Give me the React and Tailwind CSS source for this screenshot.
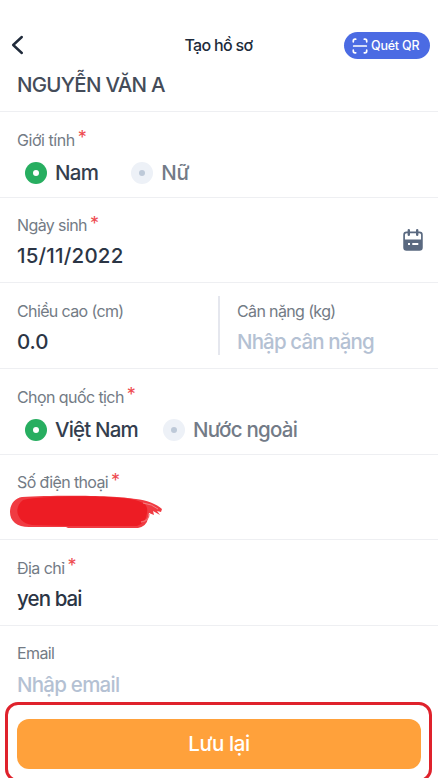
import React from "react";

function Label({ children, required, className }) {
  return (
    <div className="flex h-6 items-center text-[16px] leading-6 text-[#737b85]">
      <span className={className}>{children}</span>
      {required && <span className="-mt-[5px] ml-[3px] text-[18px] leading-6 text-[#ee4b4f]">*</span>}
    </div>
  );
}

function Field({ label, required, labelClass, height, children }) {
  return (
    <section className={`${height} shrink-0 border-b border-[#eeeff2] pl-[17px] pt-4`}>
      <Label required={required} className={labelClass}>{label}</Label>
      {children}
    </section>
  );
}

function Value({ children, className }) {
  return (
    <div className="mt-1.5 h-[26px] text-[20.5px] font-[450] leading-[26px]">
      <span className={className}>{children}</span>
    </div>
  );
}

function Radio({ on, className, children }) {
  return (
    <div className="flex items-center gap-2">
      <span className={`flex h-[22px] w-[22px] items-center justify-center rounded-full ${on ? "bg-[#27ae60]" : "bg-[#edf1f7]"}`}>
        <span className={`h-1.5 w-1.5 rounded-full ${on ? "bg-white" : "bg-[#bdc9d8]"}`} />
      </span>
      <span className={className}>{children}</span>
    </div>
  );
}

export default function App() {
  return (
    <main className="flex h-[778px] w-[438px] flex-col overflow-hidden whitespace-nowrap bg-white font-['Inter','Liberation_Sans',sans-serif]">
      <header className="grid h-[70px] shrink-0 grid-cols-[1fr_auto_1fr] items-center pl-[10px] pr-2 pt-[21px]">
        <svg className="-mt-0.5" width="13" height="20" viewBox="0 0 13 20" fill="none" stroke="#202b3b" strokeWidth="2.4" strokeLinecap="round" strokeLinejoin="round">
          <path d="M11.8 2 3.2 10l8.6 8" />
        </svg>
        <h1 className="-ml-[3px] -mt-px text-[16px] font-medium tracking-[-0.68px] text-[#202b3b]">Tạo hồ sơ</h1>
        <button className="flex h-[27px] w-[86px] items-center justify-self-end rounded-full bg-[#4b6be3] pl-2 text-white">
          <svg width="16" height="16" viewBox="0 0 16 16" fill="none" stroke="currentColor" strokeWidth="1.7" strokeLinecap="round">
            <path d="M1.3 3.8V3Q1.3 1.2 3 1.2h.7M12.3 1.2H13q1.7 0 1.7 1.8v.8M1.3 12.2v.8q0 1.8 1.7 1.8h.7M12.3 14.8h.7q1.7 0 1.7-1.8v-.8M1.7 8h12.6" />
          </svg>
          <span className="ml-[3px] mt-px text-[12.5px] font-medium tracking-[-0.2px]">Quét QR</span>
        </button>
      </header>

      <div className="h-[42px] shrink-0 border-b border-[#eeeff2] pl-[17px] pt-0.5 text-[20.5px] font-[450] leading-[26px] text-[#444c59]">
        <span className="tracking-[-0.74px]">NGUYỄN VĂN A</span>
      </div>

      <Field label="Giới tính" required height="h-[86px]" labelClass="tracking-[-0.45px]">
        <div className="mt-[8px] flex gap-[33px] pl-2 text-[20.5px] font-medium leading-[26px]">
          <Radio on className="tracking-[-0.7px] text-[#343e4e]">Nam</Radio>
          <Radio className="tracking-[-0.2px] text-[#737b87]">Nữ</Radio>
        </div>
      </Field>

      <Field label="Ngày sinh" required height="h-[85px]" labelClass="-mt-0.5 tracking-[-0.6px]">
        <div className="-mt-px flex justify-between pr-[15px]">
          <Value className="tracking-[0.2px] text-[#2b3545]">15/11/2022</Value>
          <svg className="-mt-2" width="20" height="22" viewBox="0 0 20 22" fill="none">
            <rect x="1.1" y="3.3" width="17.8" height="17.5" rx="2.4" stroke="#5a6980" strokeWidth="1.7" />
            <path d="M1 10.5h18v8q0 2.5-2.5 2.5h-13Q1 21 1 18.5Z" fill="#5a6980" />
            <path d="M5.8 1.3v4.4M14.2 1.3v4.4" stroke="#5a6980" strokeWidth="2.4" strokeLinecap="round" />
            <path d="M5 15h2M9.3 15h6" stroke="#fff" strokeWidth="1.8" />
          </svg>
        </div>
      </Field>

      <section className="grid h-[86px] shrink-0 grid-cols-[201px_1fr] border-b border-[#eeeff2] pl-[17px]">
        <div className="pt-4">
          <Label className="tracking-[-0.63px]">Chiều cao (cm)</Label>
          <Value className="tracking-[-0.1px] text-[#2b3545]">0.0</Value>
        </div>
        <div className="mb-[13px] mt-[13px] border-l-2 border-[#e5e7ee] pl-[17px] pt-[3px]">
          <Label className="tracking-[-0.63px]">Cân nặng (kg)</Label>
          <Value className="tracking-[-0.86px] text-[#b4c1d3]">Nhập cân nặng</Value>
        </div>
      </section>

      <Field label="Chọn quốc tịch" required height="h-[86px]" labelClass="tracking-[-0.58px]">
        <div className="mt-[8px] flex gap-[25px] pl-2 text-[20.5px] leading-[26px]">
          <Radio on className="font-medium tracking-[-0.82px] text-[#343e4e]">Việt Nam</Radio>
          <Radio className="font-[450] tracking-[-0.75px] text-[#737b87]">Nước ngoài</Radio>
        </div>
      </Field>

      <Field label="Số điện thoại" required height="h-[85px]" labelClass="-mt-0.5 tracking-[-0.62px]">
        <svg className="-ml-[7px]" width="154" height="36" viewBox="0 0 154 36">
          <path d="M12 2C42 0 105 0 126 4c10 1 21 5 26 10l-1 3-4-1 3 4-7-4 1 4-5-2-1 5q-1 8-10 10H58l-2-1H19C7 32 0 26 0 17 0 9 5 3 12 2Z" fill="#f03b42" />
          <path d="M13 5C35 0 102 0 125 5c11 3 13 6 12 13q-1 10-10 13H59L22 30C8 28 2 14 13 5Z" fill="#ed1c24" />
          <path d="M131 27q8-1 8-8" fill="none" stroke="#f4686d" strokeWidth="1.3" />
          <path d="M133 8q9 1 15 6" fill="none" stroke="#f58387" strokeWidth="1" />
        </svg>
      </Field>

      <Field label="Địa chỉ" required height="h-[86px]" labelClass="tracking-[-0.55px]">
        <Value className="font-medium tracking-[-0.9px] text-[#2b3545]">yen bai</Value>
      </Field>

      <section className="h-[76px] shrink-0 pl-[17px] pt-4">
        <Label className="-mt-0.5 tracking-[-0.6px]">Email</Label>
        <Value className="tracking-[-0.75px] text-[#b4c1d3]">Nhập email</Value>
      </section>

      <div className="ml-[5px] h-[80px] w-[427px] shrink-0 rounded-[13px] border-[3px] border-[#df222c] pl-[9px] pt-[14px]">
        <button className="flex h-[50px] w-[404px] items-center justify-center rounded-[12px] bg-[#ffa13b] pt-px text-[20.5px] font-medium tracking-[-0.4px] text-white">
          Lưu lại
        </button>
      </div>
    </main>
  );
}
